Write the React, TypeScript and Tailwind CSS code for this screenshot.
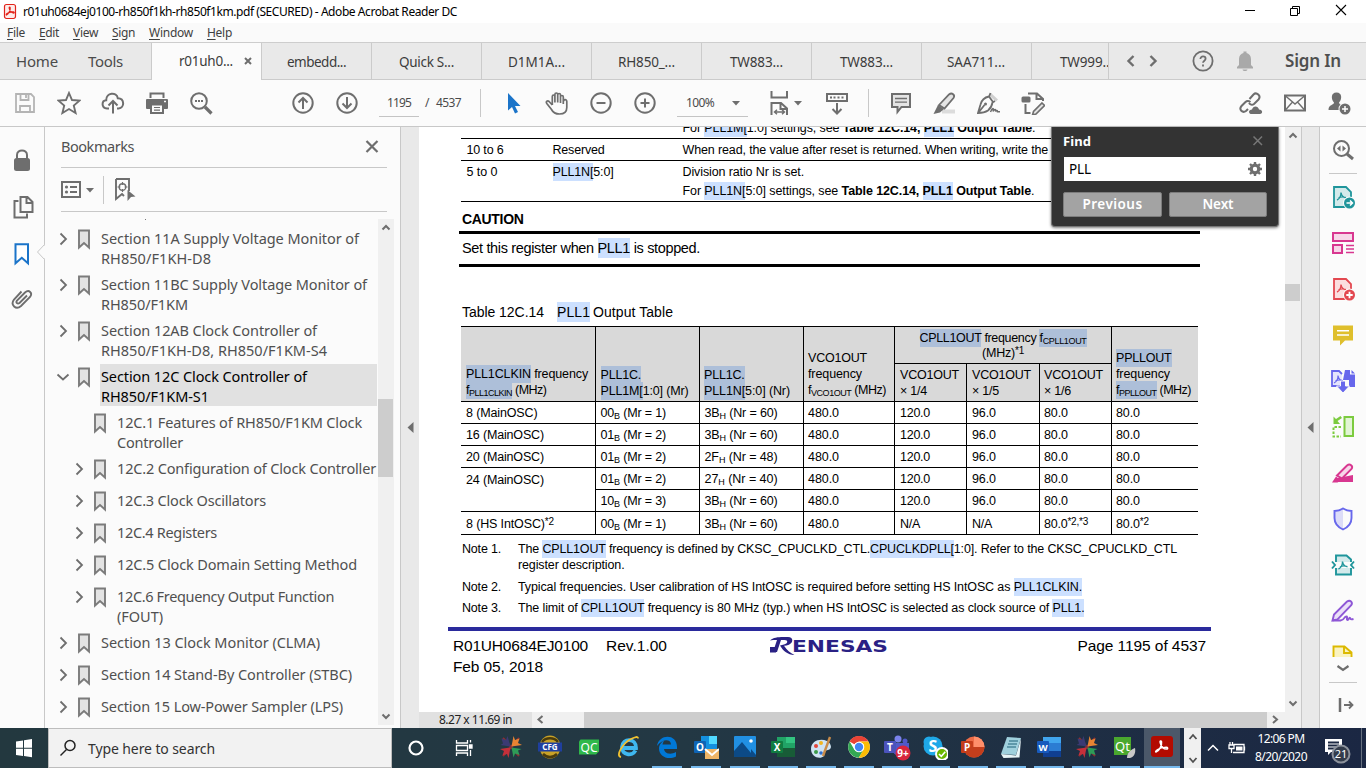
import { useLayoutEffect, useRef, type ReactNode } from "react";

/* Text whose tracking is computed so that the run is exactly w pixels wide. */
function Fit({ w, className = "", children }: { w: number; className?: string; children: ReactNode }) {
  const ref = useRef<HTMLSpanElement>(null);
  useLayoutEffect(() => {
    const el = ref.current;
    if (!el) return;
    el.style.letterSpacing = "0px";
    const n = (el.textContent || "").length || 1;
    el.style.letterSpacing = `${(w - el.getBoundingClientRect().width) / n}px`;
  }, [w]);
  return (
    <span ref={ref} className={`inline-block w-max shrink-0 whitespace-pre ${className}`}>
      {children}
    </span>
  );
}

/* Icon canvas with its origin in the middle. */
function Ic({ s = 24, c = "#6e6e6e", sw = 2, className = "", children }: { s?: number; c?: string; sw?: number; className?: string; children: ReactNode }) {
  return (
    <svg width={s} height={s} viewBox={`${-s / 2} ${-s / 2} ${s} ${s}`} fill="none" stroke={c} strokeWidth={sw} className={`block shrink-0 ${className}`}>
      {children}
    </svg>
  );
}

function H({ children }: { children: ReactNode }) {
  return <span className="bg-[#cce0ff] py-[2px]">{children}</span>;
}
function G({ children }: { children: ReactNode }) {
  return <span className="bg-[#adbfd9] py-[2px]">{children}</span>;
}
function Sub({ children }: { children: ReactNode }) {
  return <span className="relative top-[2px] text-[9px]">{children}</span>;
}
function Sup({ children }: { children: ReactNode }) {
  return <span className="relative -top-[3px] text-[10px]">{children}</span>;
}

/* ---------- window chrome ---------- */

function TitleBar() {
  return (
    <div className="flex h-[23px] items-center bg-white">
      <Ic s={18} c="#e2231a" sw={1.2} className="ml-[1px]">
        <rect x="-5.5" y="-7.500" width="11" height="14" rx="2" fill="#fdecea" />
        <path d="M-3.500 3c2-1 4-4.500 3.700-7.200-.2-1.200-1.200-.8-1 .3.500 2.500 2.300 4.600 4.500 5 .8 0 .7-1-.2-1.200-2-.3-4.500.3-6.500 1.600-1 .8-1 1.700-.5 1.500z" />
      </Ic>
      <Fit w={434} className="ml-1 text-[12px] text-black">r01uh0684ej0100-rh850f1kh-rh850f1km.pdf (SECURED) - Adobe Acrobat Reader DC</Fit>
      <div className="ml-auto flex h-full items-center pr-[13px]">
        <Ic c="#000" sw={1} className="mr-[21px]"><path d="M-5 -1.500h10" /></Ic>
        <Ic c="#000" sw={1} className="mr-[22px]"><path d="M-4.500 -3.500h7v7h-7zM-2.500 -3.500v-2h7v7h-2" /></Ic>
        <Ic c="#000" sw={1.1}><path d="M-5 -7l10 10M5 -7l-10 10" /></Ic>
      </div>
    </div>
  );
}

const menus = [
  { t: "File", w: 18, g: "ml-[7px]" },
  { t: "Edit", w: 20, g: "ml-[14px]" },
  { t: "View", w: 25, g: "ml-[14px]" },
  { t: "Sign", w: 23, g: "ml-[14px]" },
  { t: "Window", w: 44, g: "ml-[14px]" },
  { t: "Help", w: 25, g: "ml-[14px]" },
];

function MenuBar() {
  return (
    <div className="flex h-[20px] items-center border-b border-[#cdcdcd] bg-[#fafafa] text-[12px] text-[#404040]">
      {menus.map((m) => (
        <Fit key={m.t} w={m.w} className={m.g}>
          <span className="underline underline-offset-2">{m.t[0]}</span>
          {m.t.slice(1)}
        </Fit>
      ))}
    </div>
  );
}

const tabs = [
  { t: "embedd...", w: 59, p: "pl-[25px]" },
  { t: "Quick S...", w: 55, p: "pl-[27px]" },
  { t: "D1M1A...", w: 57, p: "pl-[26px]" },
  { t: "RH850_...", w: 57, p: "pl-[26px]" },
  { t: "TW883...", w: 53, p: "pl-[28px]" },
  { t: "TW883...", w: 53, p: "pl-[28px]" },
  { t: "SAA711...", w: 58, p: "pl-[25px]" },
];

function TabBar() {
  return (
    <div className="flex h-[37px] bg-[#e9e9e9] text-[13.500px] text-[#3c3c3c]">
      <div className="flex w-[152px] shrink-0 items-center border-r border-b border-[#cbcbcb] text-[15px] text-[#4b4b4b]">
        <Fit w={42} className="ml-4">Home</Fit>
        <Fit w={35} className="ml-[30px]">Tools</Fit>
      </div>
      <div className="flex w-[110px] shrink-0 items-center border-r border-[#cbcbcb] bg-[#fbfbfb] pl-[27px]">
        <Fit w={54}>r01uh0...</Fit>
        <Ic s={12} sw={2} className="ml-[9px]"><path d="M-3 -4l6 6M3 -4l-6 6" /></Ic>
      </div>
      {tabs.map((t, i) => (
        <div key={i} className={`flex w-[110px] shrink-0 items-center border-r border-b border-[#cbcbcb] pt-[2px] ${t.p}`}>
          <Fit w={t.w}>{t.t}</Fit>
        </div>
      ))}
      <div className="flex w-[77px] shrink-0 items-center overflow-hidden border-r border-b border-[#cbcbcb] pt-[2px] pl-[28px]">
        <Fit w={53}>TW999...</Fit>
      </div>
      <div className="flex grow items-center border-b border-[#cbcbcb]">
        <Ic s={12} sw={2.4} className="ml-4"><path d="M2.500 -5l-5 5 5 5" /></Ic>
        <Ic s={12} sw={2.4} className="ml-[10px]"><path d="M-2.500 -5l5 5 -5 5" /></Ic>
        <Ic className="ml-[32px]" sw={1.8}>
          <circle cx="0" cy="0" r="9.600" />
          <path d="M-2.600 -2c0-3.500 5.200-3.200 5.200-.2 0 1.800-2.600 2-2.600 4M0 3.600v2" />
        </Ic>
        <Ic c="none" className="ml-[18px]">
          <path fill="#a9a9a9" d="M-8 7.500v-1.500l2-2v-6c0-3 2-5.500 4.500-6v-1.500h3v1.500c2.500.5 4.500 3 4.500 6v6l2 2v1.500zM-2.500 8.500h5c-.5 2-4.500 2-5 0z" />
        </Ic>
        <Fit w={56} className="ml-[28px] text-[17px] font-semibold text-[#4f4f4f]">Sign In</Fit>
      </div>
    </div>
  );
}

function Cell({ children }: { children: ReactNode }) {
  return <div className="flex w-11 shrink-0 justify-center">{children}</div>;
}
function Caret() {
  return <Ic s={8} sw={0}><path d="M-4 -2h8l-4 4.500z" fill="#6e6e6e" /></Ic>;
}

function Toolbar() {
  return (
    <div className="flex h-[47px] items-center border-b border-[#c8c8c8] bg-[#fbfbfb] pl-[3px] text-[12px] text-[#4b4b4b]">
      <Cell>
        <Ic c="#b4b4b4" sw={1.8}>
          <path d="M-9 -9h15l3 3v15h-18zM-4.500 -9v6h8v-6M-5 9v-6h10v6" />
          <path d="M1 -8v3" />
        </Ic>
      </Cell>
      <Cell>
        <Ic sw={1.9}><path d="M0 -10l3 7 7.500.6-5.700 5 1.800 7.400-6.600-4-6.600 4 1.800-7.400-5.700-5 7.500-.6z" /></Ic>
      </Cell>
      <Cell>
        <Ic sw={2}><path d="M-4 5.500h-2c-6-.5-5.500-8-.8-8.200-.2-8 10.600-8.600 11.600-2 7 .2 7 9.700.8 10.200h-1.600M0 10.500v-12M-4.500 2.500l4.500-4.500 4.500 4.500" /></Ic>
      </Cell>
      <Cell>
        <Ic sw={2} className="-ml-px">
          <path d="M-6.500 -5v-4.500h13v4.500" />
          <rect x="-11" y="-4" width="22" height="10" rx="1" fill="#6e6e6e" stroke="none" />
          <rect x="-6" y="1.500" width="12" height="8.500" fill="#fbfbfb" />
          <path d="M-3 4.500h6M-3 7.200h6" strokeWidth="1.200" />
          <path d="M7 -1.500h2" stroke="#fbfbfb" strokeWidth="1.500" />
        </Ic>
      </Cell>
      <Cell>
        <Ic sw={2}>
          <circle cx="-2" cy="-2" r="7.800" />
          <path d="M4 4l6.500 6.500" strokeWidth="3.200" />
          <path d="M-6 -2h2M-3 -2h2M0 -2h2" strokeWidth="2" />
        </Ic>
      </Cell>
      <div className="ml-[58px] flex">
        <Cell><Ic sw={2}><circle r="9.700" /><path d="M0 6v-11M-4.500 -.5l4.500-4.500 4.500 4.500" /></Ic></Cell>
        <Cell><Ic sw={2}><circle r="9.700" /><path d="M0 -6v11M-4.500 .5l4.500 4.500 4.500-4.500" /></Ic></Cell>
      </div>
      <div className="ml-[10px] flex h-[27px] w-[40px] items-center justify-center border-b border-[#c4c4c4]"><Fit w={24}>1195</Fit></div>
      <Fit w={5} className="ml-[6px]">/</Fit>
      <Fit w={25} className="ml-[6px]">4537</Fit>
      <div className="ml-[19px] h-7 w-px bg-[#c8c8c8]" />
      <div className="ml-[10px] flex">
        <Cell><Ic c="none"><path fill="#1b74c9" d="M-5 -10v17.500l4-3.500 3 6.500 3-1.400-3-6.200h5.500z" /></Ic></Cell>
        <Cell>
          <Ic sw={1.7}>
            <path d="M-4.700 2v-8.500c0-2 2.600-2 2.600 0v6M-2.100 -4v-4.500c0-2 2.800-2 2.800 0v8M.7 -8c0-2 2.800-2 2.800 0v8M3.500 -6c0-2 2.800-2 2.800 0v7M6.300 -1c0-3 3.500-3 3.500-.5v6c0 4.500-3.300 6.500-7.300 6.500-4.500 0-6.500-1.500-8-4.500l-4.700-6c-1.300-2 .7-3.300 2.300-2l3.200 3.500" />
          </Ic>
        </Cell>
        <Cell><Ic sw={2}><circle r="9.700" /><path d="M-4.500 0h9" /></Ic></Cell>
        <Cell><Ic sw={2}><circle r="9.700" /><path d="M-4.500 0h9M0 -4.500v9" /></Ic></Cell>
      </div>
      <div className="ml-[10px] flex h-[27px] w-[71px] items-center border-b border-[#c4c4c4] pl-[9px]">
        <Fit w={28}>100%</Fit>
        <span className="ml-[18px]"><Caret /></span>
      </div>
      <Ic className="ml-[19px]" sw={2}>
        <path d="M-7.500 -12v6.500h15.500v-6.500M-7.500 12v-12h9.500l6 5.500v6.500M1.500 0v6h6" />
        <path d="M-4 9h9M-2 6.800l-2.500 2.200 2.500 2.200M3 6.800l2.500 2.200-2.500 2.200" strokeWidth="1.400" />
      </Ic>
      <span className="ml-[3px]"><Caret /></span>
      <Ic className="ml-[23px]" sw={2}>
        <rect x="-10" y="-9" width="20" height="7" />
        <path d="M-7 -5.500h2M-3.500 -5.500h2M.5 -5.500h2M4.500 -5.500h2" />
        <path d="M0 0v10M-4.500 6l4.500 4.500 4.500-4.500" />
      </Ic>
      <div className="ml-[19px] h-7 w-px bg-[#c8c8c8]" />
      <div className="ml-[10px] flex">
        <Cell><Ic sw={2}><path fill="#e4e4e4" d="M-9 -9h18v13h-8.500l-4 5v-5h-5.500z" /><path d="M-6 -4.500h12M-6 -.8h12" strokeWidth="1.300" /></Ic></Cell>
        <Cell>
          <Ic sw={1.8}>
            <path d="M-3 6.500h13v4h-13z" fill="#dcdcdc" stroke="none" />
            <path fill="#e4e4e4" d="M-6 2l10-10.500c3-2.500 6.500.5 4.500 3.500l-9 10.500z" />
            <path d="M-7 2l6 4-4 3.500-6.500 1.500z" fill="#6e6e6e" stroke="none" />
          </Ic>
        </Cell>
        <Cell>
          <Ic sw={1.800}>
            <path d="M2 -10l7 6.500-2 2-7-6z" fill="#d0d0d0" stroke="none" />
            <path d="M1.500 -10l-1.500 3.500c-5 1-7.500 4-8.500 8l-2.500 8.500c4 0 7-.5 10-2.500 2.500-2 4-5 4.500-8l2.500-1.500M-10.500 9.500l6-7.500M0 -6.500l4 5.500" />
            <circle cx="-3.500" cy="1" r="1.500" fill="#6e6e6e" stroke="none" />
            <path strokeWidth="1.500" d="M1.500 9c2-4.500 3.500-4.500 2.500-.5 1.500-3 3-2.500 2.500 0 1-1.500 2-1 2 .2h2.500" />
          </Ic>
        </Cell>
        <Cell>
          <Ic sw={2}>
            <path d="M-5 -9.500h9l6 5.500v2M3.500 -9.500v5.500h6M-7.500 1v9h5" />
            <rect x="-11.500" y="-6.500" width="9" height="6" rx="1.500" fill="#6e6e6e" stroke="none" />
            <path fill="#e4e4e4" strokeWidth="1.600" d="M9 0l2.500 2.500-8.500 8.500-3.500 1 1-3.500z" />
          </Ic>
        </Cell>
      </div>
      <div className="ml-auto flex pr-[5px]">
        <Cell>
          <Ic sw={2}>
            <path d="M-1.500 -4l4-4.500c3-3 8 1.500 5 5l-4.500 4.500c-2 1.500-4 .5-5-1M-.5 -1c-2-1.500-4-1-5 0l-4 4c-3 3.500 1 7.500 4.500 5l2-2" />
            <path fill="#6e6e6e" stroke="none" d="M0 11c-3-.5-2.500-4.500 1-4.500 1-4 6-4 7 0 4 0 4 4.500 1 4.500z" />
          </Ic>
        </Cell>
        <Cell><Ic sw={2}><path d="M-10 -7.500h20v15h-20z" /><path d="M-10 -7.500l10 8.500 10-8.500M-10 7.500l7.500-8.500M10 7.500l-7.500-8.500" strokeWidth="1.400" /></Ic></Cell>
        <Cell>
          <Ic c="none">
            <path fill="#6e6e6e" d="M-2.500 -10.500c6 0 5.500 7 2.500 10 0 2.500 5 2 5 6.500v1h-15.500c0-6 5.500-4.500 5.500-7.500-3-3-3.500-10 2.500-10z" />
            <circle cx="6" cy="6" r="6.500" fill="#fbfbfb" />
            <circle cx="6" cy="6" r="5.500" fill="#6e6e6e" />
            <path d="M3 6h6M6 3v6" stroke="#fff" strokeWidth="1.500" />
          </Ic>
        </Cell>
      </div>
    </div>
  );
}

/* ---------- left side ---------- */

function LeftRail() {
  return (
    <div className="relative flex w-[45px] shrink-0 flex-col items-center border-r border-[#c8c8c8] bg-[#fbfbfb] pt-[21px]">
      <Ic sw={2}>
        <rect x="-8" y="-2" width="16" height="13" rx="2.500" fill="#6e6e6e" stroke="none" />
        <path d="M-5 -1v-4c0-6 10-6 10 0v4" />
      </Ic>
      <Ic sw={2} className="mt-[23px]">
        <path d="M-1.500 -10h7l5 5v10h-12zM4.500 -10v6h6M-3.500 -6h-4v16.500h12.500v-4" />
      </Ic>
      <Ic sw={2} c="#1b74c9" className="mt-[23px]"><path fill="#fff" d="M-6.500 -9.700h12.500v19l-6.200-5.500-6.300 5.500z" /></Ic>
      <Ic sw={1.9} className="mt-[21px]">
        <path d="M5 -3.500l-7.500 7.500c-2 1.500-4-.5-2.500-2.500l8-8c4-3.500 8 .5 5 4.500l-9 9c-5 4.500-11-1-7-6.500l7.500-8" />
      </Ic>
      <svg width="9" height="16" viewBox="0 0 9 16" className="absolute top-[117px] -right-px">
        <path d="M8.500 0.500l-7 7.500 7 7.500" fill="#fbfbfb" stroke="#c8c8c8" />
        <path d="M8.500 2v12" stroke="#fbfbfb" />
      </svg>
    </div>
  );
}

type Mark = { lines: [string, number][]; sub?: boolean; arrow?: "r" | "d"; sel?: boolean };
const marks: Mark[] = [
  { lines: [["Section 11A Supply Voltage Monitor of", 258], ["RH850/F1KH-D8", 110]], arrow: "r" },
  { lines: [["Section 11BC Supply Voltage Monitor of", 266], ["RH850/F1KM", 87]], arrow: "r" },
  { lines: [["Section 12AB Clock Controller of", 216], ["RH850/F1KH-D8, RH850/F1KM-S4", 226]], arrow: "r" },
  { lines: [["Section 12C Clock Controller of", 206], ["RH850/F1KM-S1", 108]], arrow: "d", sel: true },
  { lines: [["12C.1 Features of RH850/F1KM Clock", 245], ["Controller", 66]], sub: true },
  { lines: [["12C.2 Configuration of Clock Controller", 259]], sub: true, arrow: "r" },
  { lines: [["12C.3 Clock Oscillators", 149]], sub: true, arrow: "r" },
  { lines: [["12C.4 Registers", 100]], sub: true, arrow: "r" },
  { lines: [["12C.5 Clock Domain Setting Method", 240]], sub: true, arrow: "r" },
  { lines: [["12C.6 Frequency Output Function", 217], ["(FOUT)", 46]], sub: true, arrow: "r" },
  { lines: [["Section 13 Clock Monitor (CLMA)", 219]], arrow: "r" },
  { lines: [["Section 14 Stand-By Controller (STBC)", 251]], arrow: "r" },
  { lines: [["Section 15 Low-Power Sampler (LPS)", 242]], arrow: "r" },
];

function Bookmark({ m }: { m: Mark }) {
  return (
    <div className={`flex shrink-0 ${m.lines.length > 1 ? "h-[46px]" : "h-[32px]"} ${m.sub ? "pl-[26px]" : "pl-[10px]"}`}>
      <div className="w-4 pt-[5px]">
        {m.arrow && (
          <Ic s={16} sw={1.8}>
            {m.arrow === "r" ? <path d="M-2.500 -5.500l5.500 5.500-5.500 5.500" /> : <path d="M-5.500 -2.500l5.500 5 5.500-5" />}
          </Ic>
        )}
      </div>
      <div className="pt-[1px] pl-[1px]">
        <Ic sw={1.9} c="#7b7b7b"><path fill="#e3e3e3" d="M-5 -8.500h10v17l-5-4.500-5 4.500z" /></Ic>
      </div>
      <div className="pl-[4px]">
        <div className={`flex flex-col pt-[2px] pl-px ${m.sel ? "h-[42px] w-[277px] bg-[#e1e1e1] text-black" : ""}`}>
          {m.lines.map(([t, w]) => (
            <div key={t} className="flex h-5 leading-5"><Fit w={w}>{t}</Fit></div>
          ))}
        </div>
      </div>
    </div>
  );
}

function BookmarksPanel() {
  return (
    <div className="flex w-[355px] shrink-0 flex-col bg-[#fbfbfb] text-[14.500px] text-[#505050]">
      <div className="ml-4 flex h-[41px] w-[326px] shrink-0 items-center border-b border-[#c8c8c8]">
        <Fit w={73}>Bookmarks</Fit>
        <Ic s={16} sw={2.200} className="mr-[7px] ml-auto"><path d="M-5.500 -6l11 11M5.500 -6l-11 11" /></Ic>
      </div>
      <div className="ml-4 flex h-[44px] w-[326px] shrink-0 items-center border-b border-[#c8c8c8]">
        <Ic s={20} sw={2}>
          <rect x="-9" y="-8" width="18" height="15" />
          <circle cx="-4.500" cy="-3" r="1.600" fill="#6e6e6e" stroke="none" />
          <circle cx="-4.500" cy="2" r="1.600" fill="#6e6e6e" stroke="none" />
          <path d="M-1 -3h7M-1 2h7" strokeWidth="1.800" />
        </Ic>
        <span className="ml-[5px]"><Caret /></span>
        <div className="ml-[9px] h-7 w-px bg-[#c8c8c8]" />
        <Ic sw={1.900} className="ml-[8px]">
          <path d="M-8 -11h13v12M-8 -11v20l6-5 2 2" />
          <circle cx="-1.500" cy="-3" r="3.300" strokeWidth="1.400" />
          <path d="M-1.500 -8v3M-1.500 -1v3M-6.500 -3h3M.5 -3h3" strokeWidth="1.200" />
          <path d="M3.500 0l8 6.500-4.500.5-3.500 4z" fill="#6e6e6e" stroke="none" />
        </Ic>
      </div>
      <div className="mt-[7px] flex min-h-0 grow">
        <div className="flex w-[333px] flex-col overflow-hidden">
          <div className="ml-[100px] h-px w-px shrink-0 bg-[#777]" />
          <div className="h-[6px] shrink-0" />
          {marks.map((m) => (
            <Bookmark key={m.lines[0][0]} m={m} />
          ))}
        </div>
        <div className="mb-[3px] flex w-4 flex-col items-center bg-[#f0f0f0]">
          <Ic s={16} sw={2}><path d="M-3.500 2.500l3.500-3.500 3.500 3.500" /></Ic>
          <div className="mt-[164px] h-[78px] w-[15px] self-start bg-[#cdcdcd]" />
          <Ic s={16} sw={2} className="mt-auto"><path d="M-3.500 -2.500l3.500 3.500 3.500-3.500" /></Ic>
        </div>
      </div>
    </div>
  );
}

function Splitter({ className }: { className: string }) {
  return (
    <div className={`flex shrink-0 flex-col border-l border-[#c8c8c8] bg-[#e9e9e9] pt-[295px] ${className}`}>
      <Ic s={12} sw={0}><path d="M2.500 -6v11l-6-5.500z" fill="#6e6e6e" /></Ic>
    </div>
  );
}

/* ---------- document ---------- */

const cols = "grid grid-cols-[135px_104px_104px_91px_72px_73px_72px_86px]";

type Row = { a?: ReactNode; aw?: number; m: [string, string]; n: [string, string]; v: [ReactNode, number][]; span?: boolean; h?: boolean };
const std: [ReactNode, number][] = [["480.0", 31], ["120.0", 30], ["96.0", 24], ["80.0", 24], ["80.0", 24]];
const rows: Row[] = [
  { a: "8 (MainOSC)", aw: 71.5, m: ["00", " (Mr = 1)"], n: ["3B", " (Nr = 60)"], v: std },
  { a: "16 (MainOSC)", aw: 78, m: ["01", " (Mr = 2)"], n: ["3B", " (Nr = 60)"], v: std },
  { a: "20 (MainOSC)", aw: 78, m: ["01", " (Mr = 2)"], n: ["2F", " (Nr = 48)"], v: std },
  { a: "24 (MainOSC)", aw: 78, m: ["01", " (Mr = 2)"], n: ["27", " (Nr = 40)"], v: std, span: true },
  { m: ["10", " (Mr = 3)"], n: ["3B", " (Nr = 60)"], v: std },
  {
    a: <>8 (HS IntOSC)<Sup>*2</Sup></>, aw: 88, m: ["00", " (Mr = 1)"], n: ["3B", " (Nr = 60)"], h: true,
    v: [["480.0", 31], ["N/A", 20], ["N/A", 20], [<>80.0<Sup>*2,*3</Sup></>, 44], [<>80.0<Sup>*2</Sup></>, 33]],
  },
];
const vpad = ["pl-[4px]", "pl-[5px]", "pl-[5px]", "pl-[4px]", "pl-[4px]"];

function DataRow({ r }: { r: Row }) {
  const cell = "flex items-center border-black pt-[2px]";
  return (
    <div className={`${cols} ${r.h ? "h-[23px]" : "h-[22px]"}`}>
      <div className={`${cell} border-r pl-[5px] ${r.span ? "" : "border-b"}`}>{r.a && <Fit w={r.aw ?? 0}>{r.a}</Fit>}</div>
      <div className={`${cell} border-r border-b pl-[4.500px]`}><Fit w={65.5}>{r.m[0]}<Sub>B</Sub>{r.m[1]}</Fit></div>
      <div className={`${cell} border-r border-b pl-[4.500px]`}><Fit w={73}>{r.n[0]}<Sub>H</Sub>{r.n[1]}</Fit></div>
      {r.v.map(([t, w], i) => (
        <div key={i} className={`${cell} border-b ${i < 4 ? "border-r" : ""} ${vpad[i]}`}><Fit w={w}>{t}</Fit></div>
      ))}
    </div>
  );
}

function OutputTable() {
  const bot = "flex flex-col justify-end border-b border-black pb-[2px] leading-[16px] items-start";
  return (
    <div className="ml-[42px] w-[737px] border-t border-black">
      <div className="grid h-[75px] grid-cols-[135px_104px_104px_91px_217px_86px] bg-[#d9d9d9]">
        <div className={`${bot} border-r pl-[5px]`}>
          <Fit w={122}><G>PLL1CLKIN</G> frequency</Fit>
          <Fit w={80.5}><G>f<Sub>PLL1CLKIN</Sub></G> (MHz)</Fit>
        </div>
        <div className={`${bot} border-r pl-[4.500px]`}>
          <Fit w={40.5}><G>PLL1C.</G></Fit>
          <Fit w={88}><G>PLL1M[</G>1:0] (Mr)</Fit>
        </div>
        <div className={`${bot} border-r pl-[4px]`}>
          <Fit w={40.5}><G>PLL1C.</G></Fit>
          <Fit w={86}><G>PLL1N[</G>5:0] (Nr)</Fit>
        </div>
        <div className={`${bot} border-r pl-[4px]`}>
          <Fit w={59}>VCO1OUT</Fit>
          <Fit w={54}>frequency</Fit>
          <Fit w={78}>f<Sub>VCO1OUT</Sub> (MHz)</Fit>
        </div>
        <div className="flex flex-col border-r border-black">
          <div className="flex h-[37px] flex-col items-center border-b border-black pt-[4px] leading-[15px]">
            <Fit w={167}><G>CPLL1OUT</G> frequency <G>f<Sub>CPLL1OUT</Sub></G></Fit>
            <Fit w={42} className="-mt-px">(MHz)<Sup>*1</Sup></Fit>
          </div>
          <div className="grid grow grid-cols-[72px_73px_71px]">
            <div className={`${bot} border-r pl-[5px]`}><Fit w={59}>VCO1OUT</Fit><Fit w={27}>× 1/4</Fit></div>
            <div className={`${bot} border-r pl-[5px]`}><Fit w={59}>VCO1OUT</Fit><Fit w={27}>× 1/5</Fit></div>
            <div className={`${bot} pl-[4px]`}><Fit w={59}>VCO1OUT</Fit><Fit w={27}>× 1/6</Fit></div>
          </div>
        </div>
        <div className={`${bot} pl-[4px]`}>
          <Fit w={55.5}><G>PPLLOUT</G></Fit>
          <Fit w={54}>frequency</Fit>
          <Fit w={75}><G>f<Sub>PPLLOUT</Sub></G> (MHz)</Fit>
        </div>
      </div>
      {rows.map((r, i) => <DataRow key={i} r={r} />)}
    </div>
  );
}

function RenesasLogo() {
  return (
    <svg width="120" height="20" viewBox="0 0 120 20" className="block" fill="#2a2184">
      <rect x="1" y="11" width="6" height="5.500" />
      <path d="M1 4.500c3-3 8-3.500 13-3.500h5c6 0 6 7-1.500 8.500l-2.500.3c3 4 6 7.500 10.500 9.200-7-.5-11-3.500-14.500-9.500l4-1c4-.8 4.500-4.500.5-4.500h-3.500l-4 12h-4l4-12c-3 0-5 0-7 .5z" />
      <text x="23" y="16.200" fontSize="16.500" fontWeight="700" fontFamily="DejaVu Sans, sans-serif" textLength="96" lengthAdjust="spacingAndGlyphs">ENESAS</text>
    </svg>
  );
}

function Page() {
  return (
    <div className="flex h-[585px] w-[866px] shrink-0 flex-col overflow-hidden bg-white text-[12.500px] text-black [font-family:'Liberation_Sans',Arial,sans-serif]">
      <div className="ml-[42px] w-[739px]">
        <div className="flex h-[12px] items-end overflow-hidden border-b border-black pl-[221.500px] leading-[20px]">
          <Fit w={353}>For <H>PLL1M[</H>1:0] settings, see <b>Table 12C.14, <H>PLL1</H> Output Table</b>.</Fit>
        </div>
        <div className="grid h-[22px] grid-cols-[86px_130px_1fr] items-center border-b border-black pt-[2px] pl-[5.500px]">
          <Fit w={37}>10 to 6</Fit>
          <Fit w={52}>Reserved</Fit>
          <Fit w={369}>When read, the value after reset is returned. When writing, write the </Fit>
        </div>
        <div className="grid h-[41px] grid-cols-[86px_130px_1fr] border-b border-black pt-[2px] pl-[5.500px] leading-[19px]">
          <Fit w={31}>5 to 0</Fit>
          <Fit w={61}><H>PLL1N[</H>5:0]</Fit>
          <div className="flex flex-col items-start">
            <Fit w={121.5}>Division ratio Nr is set.</Fit>
            <Fit w={352}>For <H>PLL1N[</H>5:0] settings, see <b>Table 12C.14, <H>PLL1</H> Output Table</b>.</Fit>
          </div>
        </div>
      </div>
      <div className="ml-[43px] flex h-[29px] items-center pt-[6px] text-[14px] font-bold"><Fit w={61.5}>CAUTION</Fit></div>
      <div className="ml-10 flex h-[36px] w-[741px] items-center border-y-[3px] border-black pl-[3px] text-[14.500px]">
        <Fit w={238}>Set this register when <H>PLL1</H> is stopped.</Fit>
      </div>
      <div className="ml-[43px] flex h-[59px] items-end pb-[4px] text-[14px] leading-[19px]">
        <Fit w={82}>Table 12C.14</Fit>
        <Fit w={33} className="ml-[13px]"><H>PLL1</H></Fit>
        <Fit w={80} className="ml-[3px]">Output Table</Fit>
      </div>
      <OutputTable />
      <div className="ml-[43px] grid h-[40px] grid-cols-[56px_1fr] pt-[6px] leading-[16px]">
        <Fit w={39}>Note 1.</Fit>
        <div className="flex flex-col items-start">
          <Fit w={659}>The <H>CPLL1OUT</H> frequency is defined by CKSC_CPUCLKD_CTL.<H>CPUCLKDPLL[</H>1:0]. Refer to the CKSC_CPUCLKD_CTL</Fit>
          <Fit w={106.5}>register description.</Fit>
        </div>
      </div>
      <div className="ml-[43px] grid h-[21px] grid-cols-[56px_1fr] pt-[4px] leading-[16px]">
        <Fit w={39}>Note 2.</Fit>
        <Fit w={564}>Typical frequencies. User calibration of HS IntOSC is required before setting HS IntOSC as <H>PLL1CLKIN.</H></Fit>
      </div>
      <div className="ml-[43px] grid h-[31px] grid-cols-[56px_1fr] pt-[4px] leading-[16px]">
        <Fit w={39}>Note 3.</Fit>
        <Fit w={566.5}>The limit of <H>CPLL1OUT</H> frequency is 80 MHz (typ.) when HS IntOSC is selected as clock source of <H>PLL1.</H></Fit>
      </div>
      <div className="ml-[29px] h-1 w-[763px] shrink-0 bg-[#2a2a9c]" />
      <div className="ml-[34px] flex w-[753px] pt-[4px] text-[15.500px] leading-[21px]">
        <div className="w-[153px]">
          <Fit w={135}>R01UH0684EJ0100</Fit>
          <Fit w={90}>Feb 05, 2018</Fit>
        </div>
        <Fit w={61}>Rev.1.00</Fit>
        <div className="ml-[102px] pt-px"><RenesasLogo /></div>
        <Fit w={128.5} className="ml-auto">Page 1195 of 4537</Fit>
      </div>
    </div>
  );
}

function FindPanel() {
  const btn = "flex h-[25px] items-center justify-center rounded-[2px] border border-[#7d7d7d] bg-[#a3a3a3] text-[13.500px] font-semibold text-white";
  return (
    <div className="absolute top-0 right-[22px] flex h-[100px] w-[228px] flex-col rounded-b-[4px] border-x border-b border-[#777] bg-[#333] px-[11px] shadow-[0_1px_3px_rgba(0,0,0,0.5)]">
      <div className="flex h-[30px] shrink-0 items-center">
        <Fit w={28} className="text-[13px] font-bold text-white">Find</Fit>
        <Ic s={14} c="#777" sw={1.500} className="mr-[2px] ml-auto"><path d="M-4.500 -5.500l8.500 8.500M4 -5.500l-8.500 8.500" /></Ic>
      </div>
      <div className="ml-px flex h-6 w-[202px] items-center bg-white pl-[5px] text-[13.500px] text-black">
        <Fit w={22}>PLL</Fit>
        <Ic s={16} sw={2.600} className="mr-[3px] ml-auto">
          <circle r="3.800" strokeWidth="3.200" />
          <path strokeWidth="2.400" d="M0 -7v2M0 5v2M-7 0h2M5 0h2M-5 -5l1.500 1.500M3.500 3.500l1.500 1.500M-5 5l1.500-1.500M3.500 -3.500l1.500-1.500" />
        </Ic>
      </div>
      <div className="mt-[11px] flex gap-[7px]">
        <div className={`${btn} w-[99px]`}><Fit w={60}>Previous</Fit></div>
        <div className={`${btn} w-[98px]`}><Fit w={31}>Next</Fit></div>
      </div>
    </div>
  );
}

function DocumentArea() {
  return (
    <div className="relative flex w-[882px] shrink-0 flex-col bg-[#f0f0f0]">
      <div className="flex">
        <Page />
        <div className="flex w-4 flex-col items-center">
          <Ic s={16} sw={2} className="mt-[1px]"><path d="M-3.500 1.500l3.500-3.500 3.500 3.500" /></Ic>
          <div className="mt-[140px] h-[17px] w-[15px] self-start bg-[#cdcdcd]" />
          <Ic s={16} sw={2} className="mt-auto"><path d="M-3.500 -2.500l3.500 3.500 3.500-3.500" /></Ic>
        </div>
      </div>
      <div className="flex h-4 items-center text-[12px] text-[#222]">
        <div className="flex h-full w-[113px] items-center bg-[#e1e1e1] pl-5"><Fit w={73}>8.27 x 11.69 in</Fit></div>
        <Ic s={16} sw={2}><path d="M2.500 -4l-4 3.500 4 3.500" /></Ic>
        <div className="ml-9 h-full w-[683px] bg-[#cdcdcd]" />
        <Ic s={16} sw={2}><path d="M-2 -4l4 3.500-4 3.500" /></Ic>
      </div>
      <FindPanel />
    </div>
  );
}

/* ---------- right tools ---------- */

const tri = "M-4.500 4c2.500-1 4.200-4.500 4-7.500M-.5 -3.500c.5 3 2.500 5 5 5.200M-3 2c2-1.200 4.500-1.500 7-.5";

function RightRail() {
  return (
    <div className="flex w-[47px] shrink-0 flex-col items-center border-l border-[#c8c8c8] bg-[#fbfbfb]">
      <div className="flex h-[47px] w-7 items-center justify-center border-b border-[#c8c8c8]">
        <Ic sw={2}>
          <circle cx="-1.500" cy="-1.500" r="7.500" />
          <path d="M4 4l6 5" strokeWidth="3" />
          <path d="M-2.500 -4.500v6l-3.500-3zM-.5 -4.500v6l3.500-3z" fill="#6e6e6e" stroke="none" />
        </Ic>
      </div>
      <div className="flex flex-col gap-[22px] pt-[11px]">
        <Ic c="#1f959b" sw={1.800}>
          <path fill="#d3eaeb" d="M-9 -10h12l5 5v15h-17z" /><path d={tri} strokeWidth="1.400" transform="translate(-1.500,-1)" />
          <circle cx="6.500" cy="6" r="6.500" fill="#fbfbfb" stroke="none" /><circle cx="6.500" cy="6" r="5.500" fill="#1f959b" stroke="none" />
          <path stroke="#fff" strokeWidth="1.500" d="M3.500 6h5.500M7 3.500l2.500 2.500-2.500 2.500" />
        </Ic>
        <Ic c="#d83790" sw={2}>
          <path fill="#f7d7e9" d="M-10 -10h20v8h-20zM-10 2h9v8h-9z" /><path strokeWidth="1.500" d="M3 2.500h8M3 6h8M3 9.500h8" />
        </Ic>
        <Ic c="#e34850" sw={1.800}>
          <path fill="#fbdedf" d="M-9 -10h12l5 5v15h-17z" /><path d={tri} strokeWidth="1.400" transform="translate(-1.500,-1)" />
          <circle cx="6.500" cy="6" r="6.500" fill="#fbfbfb" stroke="none" /><circle cx="6.500" cy="6" r="5.500" fill="#e34850" stroke="none" />
          <path stroke="#fff" strokeWidth="1.800" d="M3.300 6h6.400M6.500 2.800v6.400" />
        </Ic>
        <Ic c="#fff" sw={1.500}><path fill="#dfbf2c" stroke="none" d="M-10 -9.500h20v15h-8l-5 5v-5h-7z" /><path d="M-6 -4.200h12M-6 0h12" /></Ic>
        <Ic c="#6767ec" sw={1.800}>
          <path d="M-2 5h-9v-15h7l3 3" fill="#e4e4fc" /><path d={tri} strokeWidth="1.200" transform="translate(-4.500,-2)" />
          <path stroke="none" fill="#6767ec" d="M2 -11h5v4.500h5v12.500h-6v-7h-6zM8.500 -11l3.500 3.500h-3.500z" />
          <path d="M-2.500 0h5v5h4l-6.500 7-6.500-7h4z" fill="#6767ec" stroke="#fbfbfb" strokeWidth="1" />
        </Ic>
        <Ic c="#7ccb3f" sw={2}>
          <path fill="#e2f5d5" d="M1.500 -10h8.500v19h-8.500z" /><path strokeDasharray="2.500 1.500" d="M-2 0h-7.500v9.500h7.500" /><path stroke="none" fill="#7ccb3f" d="M-9.500 -3v-7.500l2.500 2.500 4.500-3 1.500 2-4.500 3 2.500 3z" />
        </Ic>
        <Ic c="#d83790" sw={1.900}>
          <path d="M-5 5l15-3v7h-15z" fill="#d83790" stroke="none" /><path fill="#f7d7e9" d="M-6 2.500l10-10c3-2.500 6.500.5 4.500 3.500l-9.500 9.500z" /><path d="M-7 3.500l5 4-3.500 2h-5.500z" fill="#d83790" stroke="none" />
        </Ic>
        <Ic c="#6767ec" sw={1.900}>
          <path d="M0 -10.500c-3 2-5.500 2.500-8.500 2.500v7c0 5.500 3 9 8.500 11.500z" fill="#dcdcf8" stroke="none" />
          <path d="M0 -10.500c-3 2-5.500 2.500-8.500 2.500v7c0 5.500 3 9 8.500 11.500 5.500-2.500 8.500-6 8.500-11.500v-7c-3 0-5.500-.5-8.500-2.500z" />
        </Ic>
        <Ic c="#1f959b" sw={1.900}>
          <path fill="#d3eaeb" d="M-7 -3v-6.500h10.500l4.500 4v2.500M-7 3v6.500h15v-6.500" /><path d={tri} strokeWidth="1.400" /><path d="M-11 -3.500l3 3.500-3 3.500M11 -3.500l-3 3.500 3 3.500" />
        </Ic>
        <Ic c="#8e57d6" sw={1.900}>
          <path fill="#eadff8" d="M-10.500 9.500l1.500-6 13-13c3-2 6.500.5 4 4l-13.500 14z" /><path d="M-10.500 9.500h8c5-1 3-4 6-4 1.500 0-.5 3.500 1 3.500s1.500-3 2.500-2 0 2 3.500 1" />
        </Ic>
      </div>
      <div className="mt-[22px] h-[12px] overflow-hidden">
        <Ic c="#dcb900" sw={1.900}><path fill="#faf3c0" d="M-9.500 -10.500h11l7 6v15h-18z" /><path d="M1 -10.500v6.500h7" /></Ic>
      </div>
      <div className="flex h-[26px] w-7 justify-center border-b border-[#c8c8c8]">
        <Ic s={20} sw={2.200} className="mt-[1px]"><path d="M-5.500 -2l5.500 4 5.500-4" /></Ic>
      </div>
      <Ic sw={2} className="mt-[10px] ml-[5px]"><path d="M-6 -7v14" strokeWidth="2.500" /><path d="M-2 0h8M3 -3.500l3.500 3.500-3.500 3.500" strokeWidth="1.800" /></Ic>
    </div>
  );
}

/* ---------- taskbar ---------- */

function Pinwheel() {
  return (
    <Ic c="none">
      <path stroke="#8b2f33" strokeWidth="2" d="M-8 -9l16 18M8 -9l-16 18" />
      <path fill="#3b3a73" d="M-.5 -.5l-10-1.500 2.500-1.500-1.500-5 4.500 1.500 1.500-4z" />
      <path fill="#e98433" d="M.5 -.5l2-10.500 1.500 4 4.500-1.500-1.500 4.500 4 2z" />
      <path fill="#2e9c57" d="M.5 .5l10 1.500-3.500 1.500 1.500 4.500-4.500-1.500-1.500 4z" />
      <path fill="#c5303a" d="M-.5 .5l-2 10.500-1.500-4-4.500 1.500 1.500-4.500-4-2z" />
    </Ic>
  );
}

function Letter({ t, x, y, s }: { t: string; x: number; y: number; s: number }) {
  return <text x={x} y={y} fontSize={s} fontWeight="700" textAnchor="middle" fill="#fff" stroke="none" fontFamily="Noto Sans, sans-serif">{t}</text>;
}

const apps: { on?: boolean; icon: ReactNode }[] = [
  { icon: <Pinwheel /> },
  { icon: <Ic c="none"><ellipse rx="10.500" ry="11.500" fill="#c9a227" /><path d="M-8 -5c4-5 12-5 16 0M-7 7c4 4 10 4 14 0" stroke="#4a3b0c" strokeWidth="2.500" /><rect x="-12" y="-4.500" width="24" height="9" fill="#1f3f9e" /><Letter t="CFG" x={0} y={3} s={8} /></Ic> },
  { icon: <Ic c="none"><path fill="#2fb84a" d="M-8.500 -7.500h18.500v12l-3 3h-17v-13z" /><text x="0" y="4.500" fontSize="12" textAnchor="middle" fill="#fff" fontFamily="Noto Sans, sans-serif">QC</text></Ic> },
  { icon: <Ic><path d="M7.500 3.500c-3 6-14 5-13.500-3.500.5-9.500 14.500-9 14 1h-13" stroke="#3fb8f0" strokeWidth="3.800" /><path d="M-7 10c-6-1 2-14 10-18 4-2 7-3 7-.5" stroke="#f2c230" strokeWidth="1.800" /></Ic> },
  { on: true, icon: <Ic c="none"><path fill="#0078d7" d="M-10 -1c1.500-12 20-13 20 1v2h-13c.5 5 7 6 12 3v4.500c-8 4-17 0-17-8 0-4 3-7 5.500-8-1.500 1.500-1.800 3-2 4h8.500c0-6-9-6-14 1.500z" /></Ic> },
  { on: true, icon: <Ic s={26} c="none"><rect x="-5" y="-11" width="16" height="17" fill="#1490df" /><rect x="3" y="-11" width="8" height="8" fill="#50d9ff" /><rect x="-12" y="-6" width="12" height="12" rx="1" fill="#0f64b5" /><Letter t="O" x={-6} y={4} s={10} /><path fill="#efb566" d="M-1 2h14v10h-14z" /><path stroke="#fff" d="M-1 2l7 6 7-6" /></Ic> },
  { on: true, icon: <Ic c="none"><rect x="-11" y="-11" width="22" height="21" rx="1" fill="#2190e3" /><path fill="#0c4a86" d="M-11 10v-6l8-9 9 11v-4l5 6v2z" /><circle cx="6" cy="-6" r="1.800" fill="#fff" /></Ic> },
  { on: true, icon: <Ic c="none"><path fill="#21a366" d="M-6 -10h18v20h-18z" /><path fill="#185c37" d="M-6 1h18v9h-18z" /><path fill="#33c481" d="M3 -10h9v6h-9z" /><rect x="-12" y="-6" width="12" height="12" rx="1" fill="#107c41" /><Letter t="X" x={-6} y={4} s={10} /></Ic> },
  { on: true, icon: <Ic c="none"><path fill="#cfe3f3" d="M-10 2c0-8 9-11 16-8 4 2 6 8 1 9-4 .5-3 3-4 6-4 4-13 1-13-7z" /><circle cx="-5" cy="-1" r="2" fill="#e2463c" /><circle cx="0" cy="-4" r="2" fill="#f2b51f" /><circle cx="-5" cy="5" r="2" fill="#3b9b4b" /><circle cx="0" cy="6" r="1.800" fill="#2d6fd0" /><path stroke="#c98c4a" strokeWidth="2.400" d="M2 9l7-19" /></Ic> },
  {
    on: true, icon: (
      <Ic c="none">
        <circle r="10.800" fill="#fff" />
        <path fill="#ea4335" d="M-9.400 -5.400a10.800 10.800 0 0 1 18.800 0h-9.400l-4.700 2.700z" />
        <path fill="#34a853" d="M-9.400 -5.400a10.800 10.800 0 0 0 9.200 16.200l4.800-8.100-4.600 2.300-4.600-2.300z" />
        <path fill="#fbbc05" d="M9.400 -5.400a10.800 10.800 0 0 1-9.600 16.200l4.800-8.200v-5.300l-4.600-2.700z" />
        <circle r="5.300" fill="#fff" /><circle r="4.200" fill="#4285f4" />
      </Ic>
    ),
  },
  { on: true, icon: <Ic s={28} c="none"><circle cx="1" cy="-8" r="3.500" fill="#7b83eb" /><circle cx="8" cy="-6" r="2.500" fill="#5059c9" /><path fill="#5059c9" d="M-4 -4h16v8c0 6-14 8-16 0z" /><rect x="-13" y="-6" width="12" height="12" rx="1" fill="#4b53bc" /><Letter t="T" x={-7} y={4} s={10} /><circle cx="6" cy="6" r="7.500" fill="#d7263d" /><Letter t="9+" x={6} y={9.5} s={10} /></Ic> },
  { on: true, icon: <Ic s={26} c="none"><circle cx="-2" cy="-1" r="9.500" fill="#1fa8e8" /><circle cx="-6" cy="-5" r="5.500" fill="#1fa8e8" /><circle cx="3" cy="3" r="5.500" fill="#1fa8e8" /><Letter t="S" x={-2} y={5} s={16} /><circle cx="7" cy="7" r="6" fill="#6bb700" stroke="#fff" /><path stroke="#fff" strokeWidth="1.600" d="M4 7l2.300 2.300 4-4.500" /></Ic> },
  { on: true, icon: <Ic c="none"><circle cx="1" r="10.500" fill="#ed6c47" /><path fill="#c43e1c" d="M1 0h10.500a10.500 10.500 0 0 1-21 0z" /><path fill="#ff8f6b" d="M1 -10.500a10.500 10.500 0 0 1 10.500 10.500h-10.500z" /><rect x="-12" y="-6" width="12" height="12" rx="1" fill="#c43e1c" /><Letter t="P" x={-6} y={4} s={10} /></Ic> },
  { on: true, icon: <Ic c="none"><path fill="#9fd0dd" d="M-4 -10l14 1-5 17-15-1z" /><path fill="#e8f5f8" d="M-10 7l15 1.500 5-17-1.500 19-16 .5z" /><path stroke="#5f99ab" d="M-2 -6h9M-3 -3h9M-4 0h9" /></Ic> },
  { on: true, icon: <Ic c="none"><path fill="#2b7cd3" d="M-6 -10h18v20h-18z" /><path fill="#41a5ee" d="M-6 -10h18v6h-18z" /><path fill="#103f91" d="M-6 4h18v6h-18z" /><rect x="-12" y="-6" width="12" height="12" rx="1" fill="#185abd" /><Letter t="W" x={-6} y={4} s={9.5} /></Ic> },
  { on: true, icon: <Pinwheel /> },
  { on: true, icon: <Ic c="none"><path fill="#4aa82e" d="M-11 -10h17v14l-4 4h-13z" /><text x="-2.500" y="4" fontSize="13" textAnchor="middle" fill="#fff" fontFamily="Noto Sans, sans-serif">Qt</text><path fill="#c8c8c8" d="M2 11c0-5 3-8 8-10 1 5-1 9-5 10z" /></Ic> },
];

function Taskbar() {
  return (
    <div className="flex h-10 bg-linear-to-r from-[#23383f] via-[#233844] to-[#1b2743] text-white">
      <div className="flex w-12 shrink-0 items-center justify-center">
        <Ic c="none"><path fill="#fff" d="M-8 -6.500l7-1v7.200h-7zM0 -7.700l8-1.200v8.600h-8zM-8 .7h7v7.200l-7-1zM0 .7h8v8.600l-8-1.200z" /></Ic>
      </div>
      <div className="flex w-[344px] shrink-0 items-center border border-[#bdbdbd] bg-[#f2f2f2]">
        <Ic c="#222" sw={1.500} className="ml-[7px]"><circle cx="2" cy="-2.500" r="5" /><path d="M-1.500 1.500l-6 6" /></Ic>
        <Fit w={127} className="ml-[8px] text-[14px] text-[#333]">Type here to search</Fit>
      </div>
      <div className="flex w-12 shrink-0 items-center justify-center"><Ic c="#fff" sw={2.200}><circle r="6.500" /></Ic></div>
      <div className="flex w-12 shrink-0 items-center justify-center">
        <Ic c="#fff" sw={1.300}><path d="M-7.500 -8v3h11v-3M-7.500 8v-3h11v3M-7.500 -2.500h11v5h-11zM6.500 -8v2.500M6.500 2v6" /><path d="M5.500 -3h2.500v3h-2.500z" fill="#fff" /></Ic>
      </div>
      <div className="ml-[3px] flex">
        {apps.map((a, i) => (
          <div key={i} className={`flex shrink-0 flex-col items-center ${i < 7 ? "w-[39px]" : "w-[38px]"}`}>
            <div className="flex h-[38px] grow items-center justify-center">{a.icon}</div>
            <div className={`h-[2px] w-[30px] ${a.on ? "bg-[#76b9ed]" : ""}`} />
          </div>
        ))}
      </div>
      <div className="flex w-[36px] shrink-0 flex-col items-center bg-[#4b5869]">
        <div className="flex grow items-center">
          <Ic c="#fff" sw={1.600}><rect x="-11" y="-11" width="22" height="21" rx="3" fill="#b30b00" stroke="none" /><path d="M-6 5c3-1 6-6 5.500-10-.3-1.500-1.800-1-1.300.5.800 3.500 3 6.500 6.500 6.500 1.500-.2 1-1.700-.5-1.700-3 0-6.500.7-9 2.500-1.500 1-1.800 2.300-1.200 2.200z" /></Ic>
        </div>
        <div className="h-[2px] w-full bg-[#76b9ed]" />
      </div>
      <div className="ml-auto flex w-[17px] shrink-0 flex-col items-center justify-between bg-[#f0f0f0]">
        <Ic s={16} c="#505050" sw={1.800}><path d="M-3.500 3l3.500-4 3.500 4" /></Ic>
        <Ic s={16} c="#505050" sw={1.800}><path d="M-3.500 -2l3.500 4 3.500-4" /></Ic>
      </div>
      <div className="flex w-[165px] shrink-0 items-center">
        <Ic c="#fff" sw={1.500}><path d="M-5 2.500l5-5 5 5" /></Ic>
        <Ic c="#fff" sw={1.300}><path d="M-3.500 -3.500h10.500v8h-11M7.500 -1.500v4M-7 -6v3M-4.500 -6v3M-8 -3h5v3.500h-5zM-5.500 .5v4.500" /><rect x="-1" y="-1.500" width="6.500" height="4" fill="#fff" stroke="none" /></Ic>
        <div className="ml-[6px] flex w-[52px] flex-col items-center text-[12px] leading-[18px]">
          <Fit w={47}>12:06 PM</Fit>
          <Fit w={52}>8/20/2020</Fit>
        </div>
        <Ic s={32} c="none" className="ml-[13px]">
          <path fill="#fff" d="M-11 -9h17v13h-11l-3 3v-3h-3z" /><path stroke="#1c2943" d="M-8 -5.500h11M-8 -2.500h11M-8 .5h8" />
          <circle cx="5" cy="6" r="8.500" fill="#333c4b" stroke="#8c929c" />
          <text x="5" y="10" fontSize="11" textAnchor="middle" fill="#fff" fontFamily="Noto Sans, sans-serif">21</text>
        </Ic>
        <div className="ml-auto h-full w-px bg-[#66707f]" />
        <div className="w-[4px]" />
      </div>
    </div>
  );
}

export default function App() {
  return (
    <div className="h-[768px] w-[1366px] overflow-hidden bg-[#fbfbfb] [font-family:'Noto_Sans','Open_Sans',sans-serif]">
      <TitleBar />
      <MenuBar />
      <TabBar />
      <Toolbar />
      <div className="flex h-[601px]">
        <LeftRail />
        <BookmarksPanel />
        <Splitter className="w-[19px] pl-[4px]" />
        <DocumentArea />
        <Splitter className="w-[18px] pl-[3px]" />
        <RightRail />
      </div>
      <Taskbar />
    </div>
  );
}
